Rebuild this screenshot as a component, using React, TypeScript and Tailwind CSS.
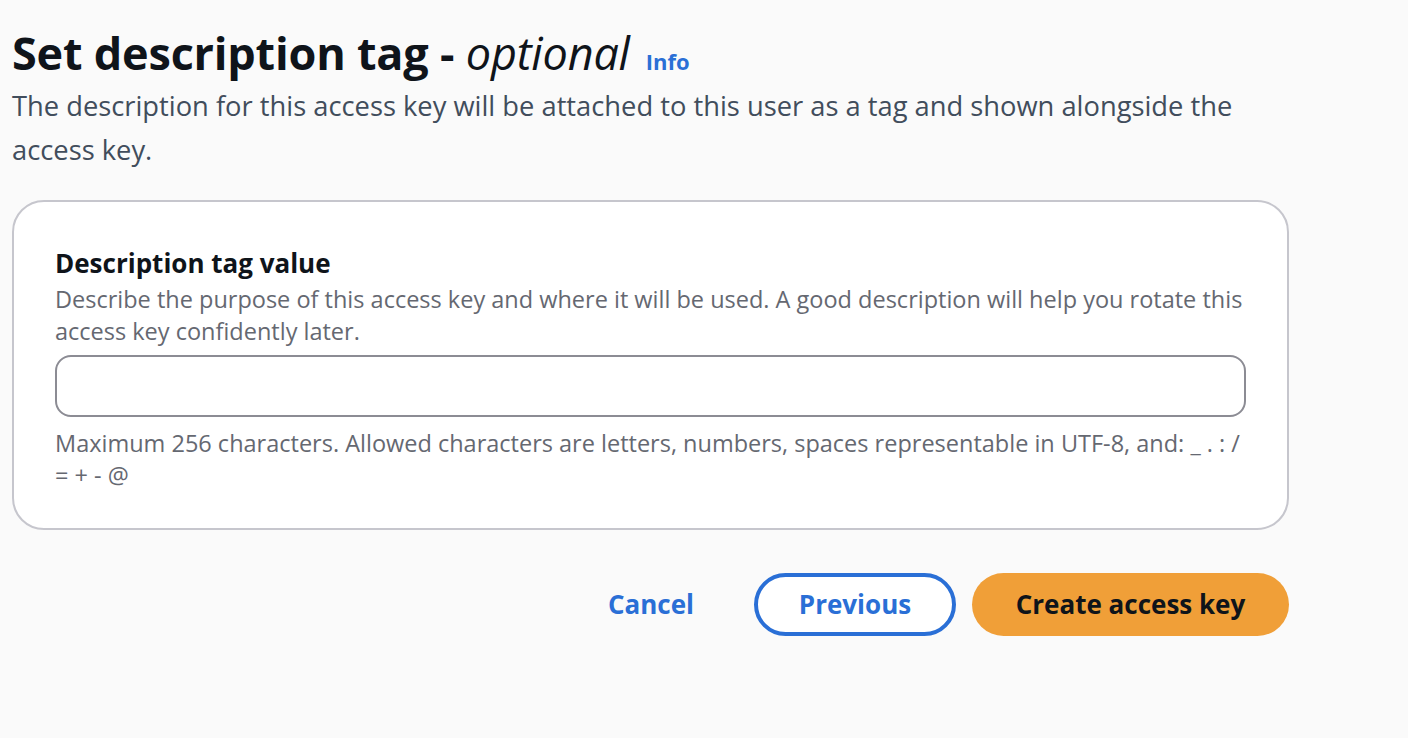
import React from 'react';

function App() {
  return (
    <div
      className="min-h-screen w-full bg-[#fafafa] pl-[12px] pr-[120px] pt-[24px] text-[#0f141a]"
      style={{ fontFamily: '"Open Sans", "Noto Sans", Arial, sans-serif' }}
    >
      <div className="w-[1277px]">
        <div className="flex items-baseline gap-[16px]">
          <h1 className="text-[45px] font-bold leading-[58px] tracking-[-0.2px]">
            Set description tag - <span className="italic font-normal">optional</span>
          </h1>
          <a className="text-[22px] font-bold text-[#2a6fd6]">Info</a>
        </div>
        <p className="mt-[2px] text-[27.3px] leading-[44px] text-[#414d5c]">
          The description for this access key will be attached to this user as a tag and shown alongside the
          <br />
          access key.
        </p>

        <div className="mt-[28px] rounded-[32px] border-2 border-[#c6c6cd] bg-white px-[41px] pb-[37px] pt-[41px]">
          <div className="text-[26px] font-bold leading-[40px]">Description tag value</div>
          <p className="text-[23.5px] leading-[32px] text-[#656871]">
            Describe the purpose of this access key and where it will be used. A good description will help you rotate this
            <br />
            access key confidently later.
          </p>
          <div className="mt-[8px] h-[62px] w-full rounded-[16px] border-2 border-[#8c8c94] bg-white" />
          <p className="mt-[10px] text-[23.5px] leading-[32px] text-[#656871]">
            Maximum 256 characters. Allowed characters are letters, numbers, spaces representable in UTF-8, and: _ . : /
            <br />= + - @
          </p>
        </div>

        <div className="mt-[43px] flex items-center justify-end">
          <button className="mr-[60px] text-[26px] font-bold text-[#2a6fd6]">Cancel</button>
          <button className="mr-[16px] h-[63px] w-[202px] rounded-full border-4 border-[#2a6fd6] bg-white text-[26px] font-bold text-[#2a6fd6]">
            Previous
          </button>
          <button className="h-[63px] w-[317px] rounded-full bg-[#f09f38] text-[26px] font-bold text-[#0f141a]">
            Create access key
          </button>
        </div>
      </div>
    </div>
  );
}

export default App;
